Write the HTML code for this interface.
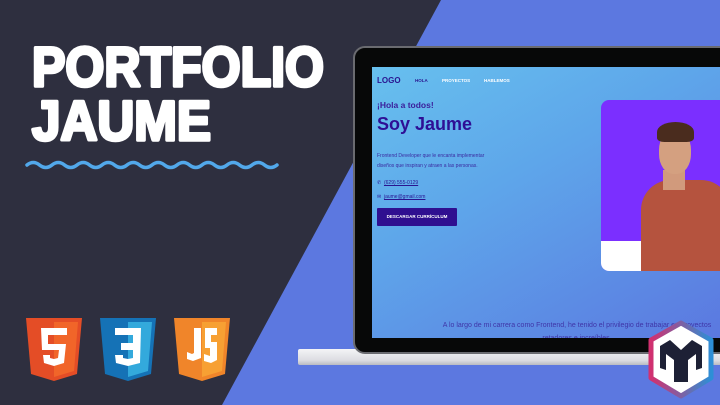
<!DOCTYPE html>
<html><head><meta charset="utf-8"><style>
*{margin:0;padding:0;box-sizing:border-box}
body{width:720px;height:405px;overflow:hidden;position:relative;background:#5c78e0;font-family:"Liberation Sans",sans-serif}
.abs{position:absolute}
</style></head><body>
<svg class="abs" style="left:0;top:0" width="720" height="405">
<polygon points="0,0 441,0 222,405 0,405" fill="#2e2f3f"/>
<text x="32" y="86" font-family="Liberation Sans" font-weight="bold" font-size="56" fill="#fff" stroke="#fff" stroke-width="3.5" stroke-linejoin="round" textLength="292" lengthAdjust="spacingAndGlyphs">PORTFOLIO</text>
<text x="32" y="140" font-family="Liberation Sans" font-weight="bold" font-size="56" fill="#fff" stroke="#fff" stroke-width="3.5" stroke-linejoin="round" textLength="179" lengthAdjust="spacingAndGlyphs">JAUME</text>
<path d="M27,165 q6.25,-5 12.5,0 t12.5,0 t12.5,0 t12.5,0 t12.5,0 t12.5,0 t12.5,0 t12.5,0 t12.5,0 t12.5,0 t12.5,0 t12.5,0 t12.5,0 t12.5,0 t12.5,0 t12.5,0 t12.5,0 t12.5,0 t12.5,0 t12.5,0" fill="none" stroke="#52a8ea" stroke-width="3.5" stroke-linecap="round"/>
<g transform="translate(26,318)">
<path d="M0,0 H56 L51,56 L28,63 L5,56 Z" fill="#e44d26"/><path d="M28,4 H52 L48,53 L28,59 Z" fill="#f16529"/>
<path d="M15,10 H41 V17 H22 V26 H40 L38,45 L28,48 L18,45 L17,37 H24 V40 L28,41 L32,40 L33,32 H16 Z" fill="#fff"/>
</g>
<g transform="translate(100,318)">
<path d="M0,0 H56 L51,56 L28,63 L5,56 Z" fill="#1572b6"/><path d="M28,4 H52 L48,53 L28,59 Z" fill="#33a9dc"/>
<path d="M15,10 H41 L40,45 L28,48 L16,45 L15,37 H23 V40 L28,41 L33,40 V32 H21 V25 H33 V17 H15 Z" fill="#fff"/>
</g>
<g transform="translate(174,318)">
<path d="M0,0 H56 L51,56 L28,63 L5,56 Z" fill="#f0852a"/><path d="M28,4 H52 L48,53 L28,59 Z" fill="#f7a033"/>
<path d="M20,10 H27 V40 L19,43 L13,41 V34 L18,36 L20,35 Z M31,10 H43 V17 H37 V24 H43 V42 L37,45 L30,43 V36 L36,38 V30 H31 Z" fill="#fff"/>
</g>
</svg>
<div class="abs" style="left:298px;top:349px;width:430px;height:16px;background:linear-gradient(#f4f4f6,#dcdde2 70%,#b9bbc2);border-radius:2px"></div>
<div class="abs" style="left:353px;top:46px;width:380px;height:308px;background:#070808;border:2px solid #6a6b70;border-radius:12px"></div>
<div class="abs" style="left:372px;top:67px;width:348px;height:271px;background:linear-gradient(150deg,#67c0ee 0%,#5ea6ea 40%,#5b78e0 100%);overflow:hidden;font-family:'Liberation Sans',sans-serif">
 <div class="abs" style="left:5px;top:9px;font-weight:bold;font-size:8px;color:#2a1590">LOGO</div>
 <div class="abs" style="left:43px;top:11px;font-weight:bold;font-size:4.5px;color:#2a1590">HOLA</div>
 <div class="abs" style="left:70px;top:11px;font-weight:bold;font-size:4.5px;color:#fff">PROYECTOS</div>
 <div class="abs" style="left:112px;top:11px;font-weight:bold;font-size:4.5px;color:#fff">HABLEMOS</div>
 <div class="abs" style="left:5px;top:33px;font-weight:bold;font-size:8.5px;color:#3a1c9a">¡Hola a todos!</div>
 <div class="abs" style="left:5px;top:47px;font-weight:bold;font-size:18px;color:#2e0f95">Soy Jaume</div>
 <div class="abs" style="left:5px;top:85px;font-size:5px;line-height:9.5px;color:#3a2aa0">Frontend Developer que le encanta implementar<br>diseños que inspiran y atraen a las personas.</div>
 <div class="abs" style="left:5px;top:113px;font-size:5px;color:#2a1590">✆ &nbsp;<u>(629) 555-0129</u></div>
 <div class="abs" style="left:5px;top:127px;font-size:5px;color:#2a1590">✉ &nbsp;<u>jaume@gmail.com</u></div>
 <div class="abs" style="left:5px;top:141px;width:80px;height:18px;background:#2f0f90;border-radius:1px;color:#fff;font-weight:bold;font-size:4.5px;line-height:18px;text-align:center">DESCARGAR CURRÍCULUM</div>
 <div class="abs" style="left:229px;top:33px;width:130px;height:171px;background:#7b2fff;border-radius:8px;overflow:hidden">
  <div class="abs" style="left:0;top:141px;width:130px;height:30px;background:#fff"></div>
  <div class="abs" style="left:40px;top:80px;width:90px;height:95px;background:#b5533e;border-radius:30px 30px 0 0"></div>
  <div class="abs" style="left:62px;top:70px;width:22px;height:20px;background:#d19a7c"></div>
  <div class="abs" style="left:58px;top:30px;width:32px;height:44px;background:#d4a080;border-radius:45%"></div>
  <div class="abs" style="left:56px;top:22px;width:37px;height:20px;background:#4a2c1e;border-radius:50% 50% 20% 20%"></div>
 </div>
 <div class="abs" style="left:60px;top:252px;width:290px;text-align:center;font-size:7px;line-height:13px;color:#3f35a8">A lo largo de mi carrera como Frontend, he tenido el privilegio de trabajar en proyectos retadores e increíbles.</div>
</div>
<svg class="abs" style="left:646px;top:320px" width="70" height="80" viewBox="0 0 70 80">
<defs><linearGradient id="g" x1="0" y1="0" x2="1" y2="0"><stop offset="0" stop-color="#d2306f"/><stop offset="1" stop-color="#2d8fd6"/></linearGradient></defs>
<polygon points="35,3 65,20 65,58 35,76 5,58 5,20" fill="#fff" stroke="url(#g)" stroke-width="5" stroke-linejoin="round"/>
<path d="M14,26 L24,20 L35,30 L46,20 L56,26 L56,48 L50,50 L50,34 L42,40 L42,62 L28,62 L28,40 L20,34 L20,50 L14,48 Z" fill="#1d2035"/>
</svg>
</body></html>
